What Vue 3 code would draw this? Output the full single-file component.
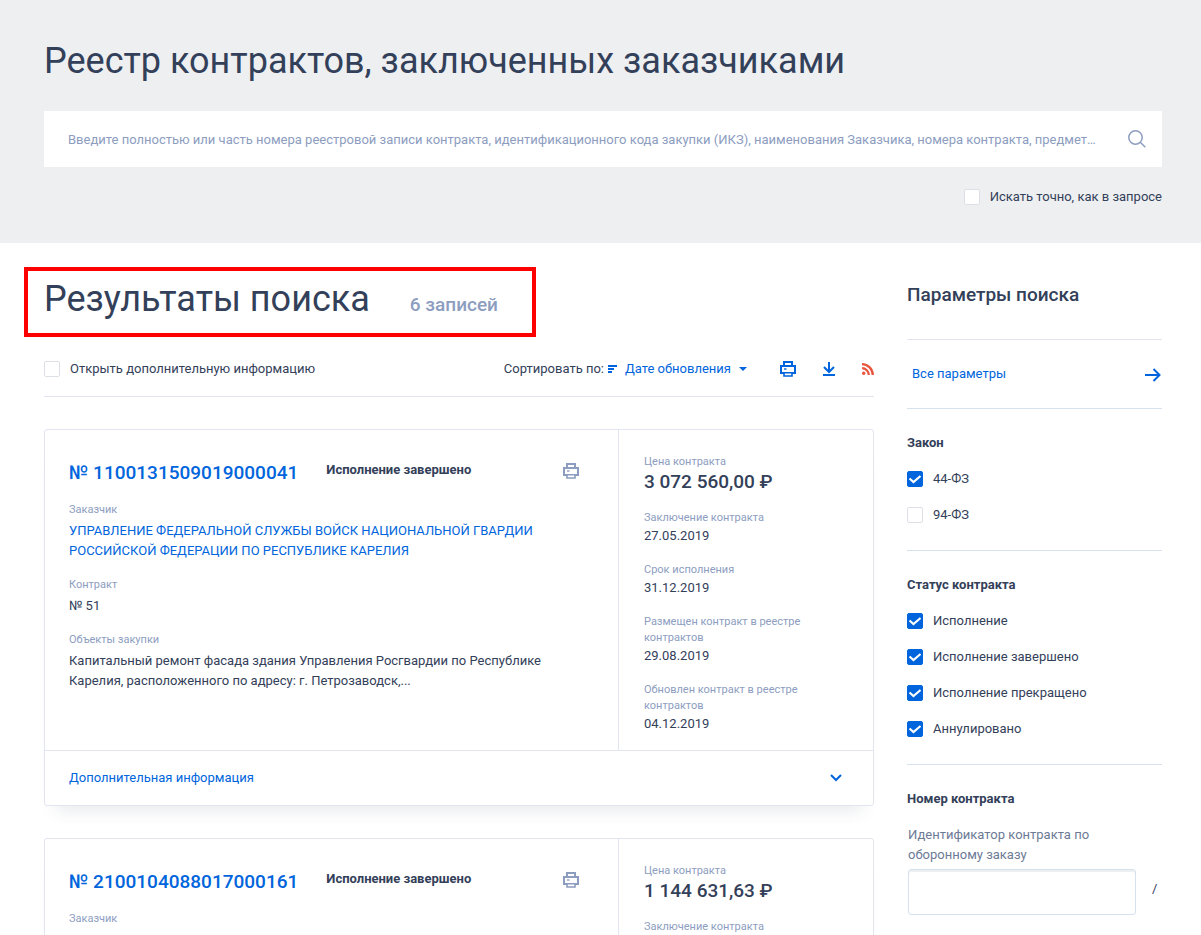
<script setup>
import { ref } from 'vue'

const query = ref('')
const exact = ref(false)
const openExtra = ref(false)
const orderId = ref('')

const contracts = [
  {
    number: '№ 1100131509019000041',
    status: 'Исполнение завершено',
    customer: 'УПРАВЛЕНИЕ ФЕДЕРАЛЬНОЙ СЛУЖБЫ ВОЙСК НАЦИОНАЛЬНОЙ ГВАРДИИ РОССИЙСКОЙ ФЕДЕРАЦИИ ПО РЕСПУБЛИКЕ КАРЕЛИЯ',
    contract: '№ 51',
    subject: 'Капитальный ремонт фасада здания Управления Росгвардии по Республике Карелия, расположенного по адресу: г. Петрозаводск,...',
    price: '3 072 560,00 ₽',
    dates: [
      { label: 'Заключение контракта', value: '27.05.2019' },
      { label: 'Срок исполнения', value: '31.12.2019' },
      { label: 'Размещен контракт в реестре контрактов', value: '29.08.2019' },
      { label: 'Обновлен контракт в реестре контрактов', value: '04.12.2019' },
    ],
  },
  {
    number: '№ 2100104088017000161',
    status: 'Исполнение завершено',
    price: '1 144 631,63 ₽',
    dates: [{ label: 'Заключение контракта' }],
  },
]

const groups = ref([
  {
    title: 'Закон',
    items: [
      { label: '44-ФЗ', checked: true },
      { label: '94-ФЗ', checked: false },
    ],
  },
  {
    title: 'Статус контракта',
    items: [
      { label: 'Исполнение', checked: true },
      { label: 'Исполнение завершено', checked: true },
      { label: 'Исполнение прекращено', checked: true },
      { label: 'Аннулировано', checked: true },
    ],
  },
])
</script>

<template>
  <div class="page">
    <header class="hero">
      <h1 class="title">Реестр контрактов, заключенных заказчиками</h1>
      <form class="search" @submit.prevent>
        <input
          v-model="query"
          class="search-input"
          type="text"
          aria-label="Поиск"
          placeholder="Введите полностью или часть номера реестровой записи контракта, идентификационного кода закупки (ИКЗ), наименования Заказчика, номера контракта, предмет…"
        />
        <button class="icon-btn" type="submit" aria-label="Найти">
          <svg width="18" height="18" viewBox="0 0 18 18" fill="none" stroke="#8d9dbf" stroke-width="1.5">
            <circle cx="7.5" cy="7.5" r="6.7" />
            <path d="M12.3 12.3L17.3 17.3" />
          </svg>
        </button>
      </form>
      <label class="check exact">
        <input v-model="exact" type="checkbox" />
        <span>Искать точно, как в запросе</span>
      </label>
    </header>

    <div class="columns">
      <main class="results">
        <div class="results-head">
          <h2 class="title">Результаты поиска</h2>
          <span class="count">6 записей</span>
          <div class="frame"></div>
        </div>

        <div class="toolbar">
          <label class="check">
            <input v-model="openExtra" type="checkbox" />
            <span>Открыть дополнительную информацию</span>
          </label>
          <div class="tools">
            <div class="sort">
              <span>Сортировать по:</span>
              <svg width="9" height="8" viewBox="0 0 9 8" fill="#0065dc">
                <path d="M0 0h9v2H0zM0 3h6v2H0zM0 6h4v2H0z" />
              </svg>
              <button class="sort-btn" type="button">
                Дате обновления
                <svg width="8" height="4" viewBox="0 0 8 4" fill="#0065dc"><path d="M0 0h8L4 4z" /></svg>
              </button>
            </div>
            <div class="actions">
              <button class="icon-btn" type="button" aria-label="Печать">
                <svg width="16" height="16" viewBox="0 0 16 16" fill="none" stroke="#0065dc" stroke-width="2">
                  <path d="M4 4V1h8v3" />
                  <path d="M4 12H1V5h14v7h-3" />
                  <path d="M4 11.8h8V15H4z" stroke-width="1.6" />
                  <path d="M4 8h2.5" stroke-width="1.4" />
                </svg>
              </button>
              <button class="icon-btn" type="button" aria-label="Скачать">
                <svg width="12" height="14" viewBox="0 0 12 14" fill="none" stroke="#0065dc" stroke-width="2">
                  <path d="M6 0v9.5M1 5l5 5 5-5M0 13h12" />
                </svg>
              </button>
              <button class="icon-btn" type="button" aria-label="RSS">
                <svg width="12" height="12" viewBox="0 0 12 12" fill="none" stroke="#e8563f" stroke-width="2.3">
                  <circle cx="1.7" cy="10.3" r="1.7" fill="#e8563f" stroke="none" />
                  <path d="M0 5.2a6.8 6.8 0 0 1 6.8 6.8M0 1.2a10.8 10.8 0 0 1 10.8 10.8" />
                </svg>
              </button>
            </div>
          </div>
        </div>

        <article v-for="c in contracts" :key="c.number" class="card">
          <div class="card-main">
            <div class="info">
              <div class="card-head">
                <a class="number" href="#">{{ c.number }}</a>
                <span class="status">{{ c.status }}</span>
                <button class="icon-btn print" type="button" aria-label="Печать">
                  <svg width="16" height="16" viewBox="0 0 16 16" fill="none" stroke="#8d9dbf" stroke-width="2">
                    <path d="M4 4V1h8v3" />
                    <path d="M4 12H1V5h14v7h-3" />
                    <path d="M4 11.8h8V15H4z" stroke-width="1.6" />
                    <path d="M4 8h2.5" stroke-width="1.4" />
                  </svg>
                </button>
              </div>
              <div class="field">
                <div class="label">Заказчик</div>
                <a v-if="c.customer" class="value" href="#">{{ c.customer }}</a>
              </div>
              <div v-if="c.contract" class="field">
                <div class="label">Контракт</div>
                <div class="value">{{ c.contract }}</div>
              </div>
              <div v-if="c.subject" class="field">
                <div class="label">Объекты закупки</div>
                <div class="value">{{ c.subject }}</div>
              </div>
            </div>
            <div class="summary">
              <div>
                <div class="label">Цена контракта</div>
                <div class="price">{{ c.price }}</div>
              </div>
              <div v-for="d in c.dates" :key="d.label">
                <div class="label">{{ d.label }}</div>
                <div v-if="d.value" class="value">{{ d.value }}</div>
              </div>
            </div>
          </div>
          <button v-if="c.customer" class="more" type="button">
            Дополнительная информация
            <svg width="12" height="8" viewBox="0 0 12 8" fill="none" stroke="#0065dc" stroke-width="2">
              <path d="M1 1l5 5 5-5" />
            </svg>
          </button>
        </article>
      </main>

      <aside class="filters">
        <h3 class="filters-title">Параметры поиска</h3>
        <a class="all" href="#">
          Все параметры
          <svg width="16" height="16" viewBox="0 0 16 16" fill="none" stroke="#0065dc" stroke-width="2">
            <path d="M0 9h14M8.5 3l6 6-6 6" />
          </svg>
        </a>
        <fieldset v-for="g in groups" :key="g.title" class="group">
          <legend class="group-title">{{ g.title }}</legend>
          <label v-for="i in g.items" :key="i.label" class="check">
            <input v-model="i.checked" type="checkbox" />
            <span>{{ i.label }}</span>
          </label>
        </fieldset>
        <section class="group">
          <h4 class="group-title">Номер контракта</h4>
          <div class="order">
            <label class="id-label" for="order-id">Идентификатор контракта по оборонному заказу</label>
            <div class="id-row">
              <input id="order-id" v-model="orderId" class="id-input" type="text" />
              <span>/</span>
            </div>
          </div>
        </section>
      </aside>
    </div>
  </div>
</template>

<style>
body {
  margin: 0;
  background: #fff;
}
</style>

<style scoped>
.page {
  height: 100vh;
  overflow-y: auto;
  scrollbar-width: none;
  font: 13px/20px Roboto, "Liberation Sans", sans-serif;
  color: #334059;
}
.page * {
  box-sizing: border-box;
}
button {
  font: inherit;
  background: none;
  border: 0;
  padding: 0;
  cursor: pointer;
}
a {
  color: #0065dc;
  text-decoration: none;
}
svg {
  display: block;
  flex: none;
}
h1, h2, h3, h4 {
  margin: 0;
}
.title {
  font-size: 36px;
  line-height: 44px;
  font-weight: 400;
}
.hero {
  background: #eeeff1;
  padding: 39px 39px 36px 44px;
}
.search {
  display: flex;
  align-items: center;
  background: #fff;
  height: 56px;
  margin: 28px 0 20px;
  padding: 0 16px 0 24px;
}
.search-input {
  flex: 1;
  min-width: 0;
  height: 56px;
  border: 0;
  outline: 0;
  padding: 0;
  margin-right: 24px;
  font: inherit;
  color: inherit;
  text-overflow: ellipsis;
}
.search-input::placeholder {
  color: #8d9dbf;
  opacity: 1;
}
.check {
  display: flex;
  align-items: center;
  gap: 10px;
}
.check input {
  appearance: none;
  width: 16px;
  height: 16px;
  margin: 0;
  flex: none;
  border: 1px solid #dcdfe6;
  border-radius: 2px;
  background: #fff;
}
.check input:checked {
  border-color: #0065dc;
  background: #0065dc url("data:image/svg+xml,%3Csvg xmlns='http://www.w3.org/2000/svg' viewBox='0 0 16 16'%3E%3Cpath d='M2.500 7.500l4 3.500L13.500 5' fill='none' stroke='white' stroke-width='2.200'/%3E%3C/svg%3E") center / 16px 16px no-repeat;
}
.exact {
  justify-content: flex-end;
}
.columns {
  display: grid;
  grid-template-columns: minmax(0, 1fr) 255px;
  gap: 33px;
  padding: 0 39px 0 44px;
}
.results-head {
  position: relative;
  display: flex;
  align-items: baseline;
  gap: 40px;
  padding-top: 34px;
  width: fit-content;
}
.count {
  font-size: 19px;
  font-weight: 500;
  color: #8d9dbf;
}
.frame {
  position: absolute;
  inset: 24px -38px -16px -20px;
  border: 4px solid #f00;
}
.toolbar {
  display: flex;
  justify-content: space-between;
  align-items: center;
  margin-top: 38px;
  padding-bottom: 17px;
  border-bottom: 1px solid #e2e4f0;
}
.tools {
  display: flex;
  align-items: center;
  gap: 33px;
}
.actions {
  display: flex;
  align-items: center;
  gap: 27px;
}
.sort {
  display: flex;
  align-items: center;
  gap: 4px;
}
.sort-btn {
  display: flex;
  align-items: center;
  gap: 8px;
  margin-left: 4px;
  color: #0065dc;
}
.card {
  margin-top: 32px;
  border: 1px solid #e2e4f0;
  border-radius: 3px;
  background: #fff;
  box-shadow: 0 16px 16px -12px rgba(51, 64, 89, 0.12);
}
.card-main {
  display: grid;
  grid-template-columns: minmax(0, 1fr) 255px;
}
.info {
  display: flex;
  flex-direction: column;
  gap: 16px;
  padding: 31px 39px 16px 24px;
}
.card-head {
  display: flex;
  gap: 28px;
  min-height: 25px;
}
.number {
  font-size: 19px;
  line-height: 24px;
  font-weight: 500;
}
.status {
  font-weight: 700;
  line-height: 18px;
}
.print {
  margin-left: auto;
  height: 20px;
}
.label {
  font-size: 11px;
  line-height: 16px;
  color: #8d9dbf;
}
.field {
  display: flex;
  flex-direction: column;
  gap: 3px;
}
.summary {
  display: flex;
  flex-direction: column;
  gap: 16px;
  padding: 24px 40px 16px 25px;
  border-left: 1px solid #e2e4f0;
}
.price {
  font-size: 19px;
  line-height: 24px;
  font-weight: 500;
}
.more {
  display: flex;
  justify-content: space-between;
  align-items: center;
  width: 100%;
  height: 55px;
  padding: 0 31px 0 24px;
  border-top: 1px solid #e2e4f0;
  color: #0065dc;
}
.filters-title {
  padding: 40px 0 32px;
  font-size: 19px;
  line-height: 24px;
  font-weight: 500;
}
.all {
  display: flex;
  justify-content: space-between;
  align-items: center;
  height: 69px;
  padding: 0 1px 0 5px;
  border-top: 1px solid #e2e4f0;
}
.group {
  display: flex;
  flex-direction: column;
  gap: 16px;
  margin: 0;
  border: 0;
  border-top: 1px solid #d5e2ee;
  padding: 24px 0 25px;
}
.group-title {
  float: left;
  padding: 0;
  font-size: 13px;
  line-height: 20px;
  font-weight: 700;
}
.order {
  padding-left: 1px;
}
.id-label {
  display: block;
  max-width: 220px;
  margin-bottom: 4px;
  color: #6c7a96;
}
.id-row {
  display: flex;
  gap: 16px;
  line-height: 40px;
}
.id-input {
  flex: none;
  width: 228px;
  height: 46px;
  padding: 0 12px;
  font: inherit;
  border: 1px solid #d5e2ee;
  border-radius: 3px;
  box-shadow: inset 0 2px 0 #eeeff3;
}
</style>
